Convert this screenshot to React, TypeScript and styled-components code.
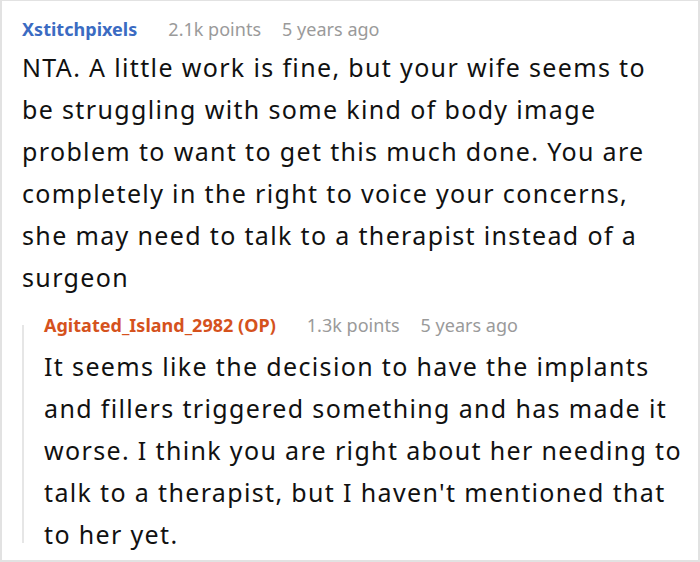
import styled, { createGlobalStyle } from 'styled-components';

const GlobalStyle = createGlobalStyle`
  html, body {
    margin: 0;
    padding: 0;
    background: #fff;
  }
`;

const Frame = styled.div`
  box-sizing: border-box;
  width: 700px;
  height: 562px;
  border: 2px solid #e2e2e2;
  border-top-width: 1px;
  padding: 13px 18px 0 20px;
  font-family: 'Noto Sans', 'Open Sans', sans-serif;
  color: #111;
  overflow: hidden;
`;

const Comment = styled.div`
  display: flex;
  flex-direction: column;
`;

const Meta = styled.div`
  display: flex;
  align-items: baseline;
  gap: 21px;
  font-size: 18px;
  line-height: 30px;
  letter-spacing: 0.02px;
`;

const Author = styled.span<{ $op?: boolean }>`
  font-weight: 700;
  margin-right: 10px;
  color: ${(p) => (p.$op ? '#d5521d' : '#3b6bc2')};
`;

const Muted = styled.span`
  color: #9a9a9a;
`;

const Body = styled.p<{ $gap?: number }>`
  margin: ${(p) => p.$gap ?? 2}px 0 0;
  font-size: 25px;
  line-height: 42px;
  letter-spacing: 1.35px;
`;

const Line = styled.span`
  display: block;
  white-space: nowrap;
`;

const Reply = styled.div`
  position: relative;
  margin-top: 12px;
  padding-left: 22px;

  &::before {
    content: '';
    position: absolute;
    left: 0;
    top: 15px;
    bottom: 12px;
    width: 2px;
    background: #e6e6e6;
  }
`;

const comments = {
  parent: {
    author: 'Xstitchpixels',
    points: '2.1k points',
    age: '5 years ago',
    lines: [
      'NTA. A little work is fine, but your wife seems to',
      'be struggling with some kind of body image',
      'problem to want to get this much done. You are',
      'completely in the right to voice your concerns,',
      'she may need to talk to a therapist instead of a',
      'surgeon',
    ],
  },
  reply: {
    author: 'Agitated_Island_2982 (OP)',
    points: '1.3k points',
    age: '5 years ago',
    lines: [
      'It seems like the decision to have the implants',
      'and fillers triggered something and has made it',
      'worse. I think you are right about her needing to',
      "talk to a therapist, but I haven't mentioned that",
      'to her yet.',
    ],
  },
};

export default function App() {
  return (
    <>
      <GlobalStyle />
      <Frame>
        <Comment>
          <Meta>
            <Author>{comments.parent.author}</Author>
            <Muted>{comments.parent.points}</Muted>
            <Muted>{comments.parent.age}</Muted>
          </Meta>
          <Body>
            {comments.parent.lines.map((l) => (
              <Line key={l}>{l}</Line>
            ))}
          </Body>
        </Comment>
        <Reply>
          <Comment>
            <Meta>
              <Author $op>{comments.reply.author}</Author>
              <Muted>{comments.reply.points}</Muted>
              <Muted>{comments.reply.age}</Muted>
            </Meta>
            <Body $gap={5}>
              {comments.reply.lines.map((l) => (
                <Line key={l}>{l}</Line>
              ))}
            </Body>
          </Comment>
        </Reply>
      </Frame>
    </>
  );
}
